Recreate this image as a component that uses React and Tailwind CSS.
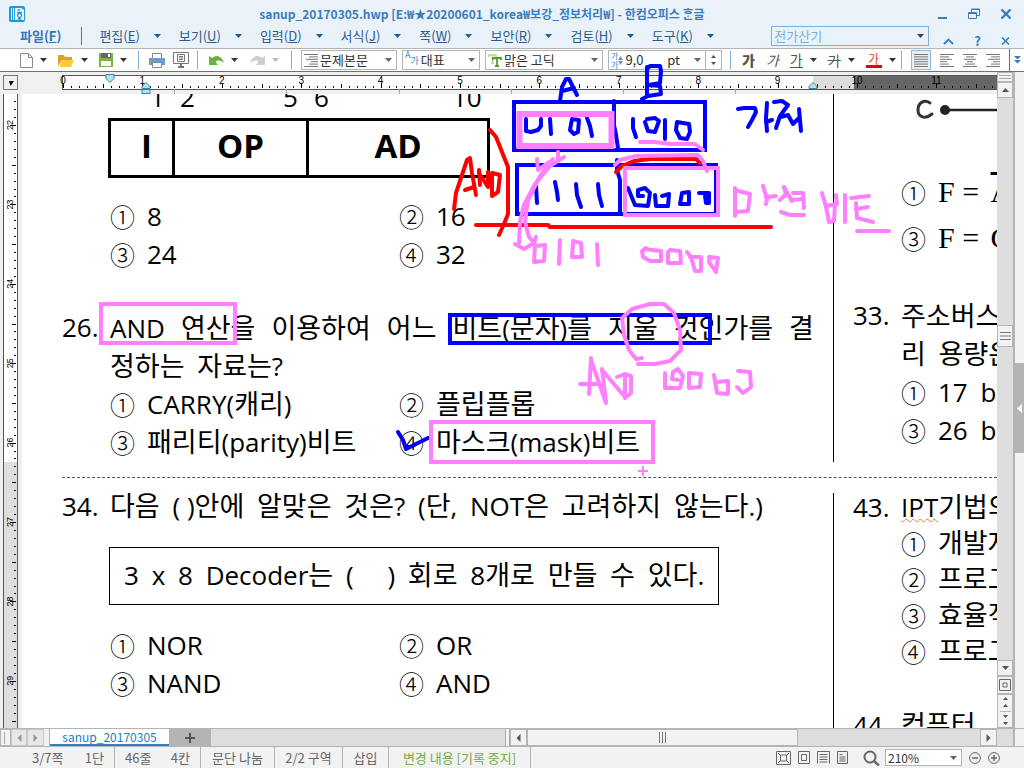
import React from "react";

const UI = "font-['Noto_Sans_CJK_KR',sans-serif]";

function Mixed({ children }) {
  return children.split(/([가-힣]+)/).map((part, i) =>
    i % 2 ? <span key={i} className="text-[27px]">{part}</span> : part
  );
}

function Words({ children }) {
  const words = children.split(" ");
  return words.map((w, i) => (
    <React.Fragment key={i}>
      <span className={i < words.length - 1 ? "mr-1.5" : ""}><Mixed>{w}</Mixed></span>
      {i < words.length - 1 ? " " : ""}
    </React.Fragment>
  ));
}

function Caret({ className = "text-[#444]" }) {
  return (
    <svg width="7" height="4" viewBox="0 0 7 4" className={`shrink-0 ${className}`}>
      <path d="M0 0h7L3.500 4z" fill="currentColor" />
    </svg>
  );
}

function Sep() {
  return <span className="h-[18px] w-px shrink-0 bg-[#7fb0d8]" />;
}

/* ---------- title and menu ---------- */

const menus = [
  ["편집", "E"],
  ["보기", "U"],
  ["입력", "D"],
  ["서식", "J"],
  ["쪽", "W"],
  ["보안", "R"],
  ["검토", "H"],
  ["도구", "K"],
];

function TitleBar() {
  return (
    <div className="flex h-6 items-center px-2 pt-1">
      <svg width="18" height="18" viewBox="0 0 18 18">
        <rect x="1" y="1" width="16" height="16" rx="2" fill="#1b9ad6" />
        <path d="M3.500 3v12M5.500 3v12" stroke="#fff" strokeWidth="1" />
        <path d="M7 3h6l3 2v10H7z" fill="#fff" />
        <path d="M9.500 5h3M9 7.500h5M11.500 8.500a2 2 0 1 0 .1 0M9.500 14h4" stroke="#1b9ad6" strokeWidth="1.300" fill="none" />
      </svg>
      <h1 className="flex-1 truncate text-center text-[12px] leading-5 font-bold text-[#3a7dbd]">
        sanup_20170305.hwp [E:₩★20200601_korea₩보강_정보처리₩] - 한컴오피스 ᄒᆞᆫ글
      </h1>
      <div className="flex items-center gap-5 pr-1 text-[#3a7dbd]">
        <button aria-label="최소화">
          <svg width="10" height="12" viewBox="0 0 10 12"><path d="M0 10h9" stroke="currentColor" strokeWidth="2" /></svg>
        </button>
        <button aria-label="이전 크기로">
          <svg width="12" height="12" viewBox="0 0 12 12" fill="none" stroke="currentColor">
            <path d="M3.500 4V1h8v6.500H9M3.500 1.500h8" /><path d="M.5 4.500h8v6h-8zM.5 5.500h8" />
          </svg>
        </button>
        <button aria-label="닫기">
          <svg width="12" height="12" viewBox="0 0 12 12"><path d="M1.500 1.500l9 9M10.500 1.500l-9 9" stroke="currentColor" strokeWidth="2.400" /></svg>
        </button>
      </div>
    </div>
  );
}

function MenuBar() {
  return (
    <div className="flex h-6 items-center pr-3.5 pl-5 text-[13px] leading-5 text-[#2a5b8c]">
      <button className="font-bold text-[#2f78bb]">
        파일(<span className="underline">F</span>)
      </button>
      <span className="mr-[17px] ml-5 h-[18px] w-px bg-[#3a7dbd]" />
      <nav className="flex gap-[18px]">
        {menus.map(([name, key]) => (
          <button key={key} className="flex items-center gap-3.5">
            <span>
              {name}(<span className="underline">{key}</span>)
            </span>
            <Caret className="text-[#1f5c99]" />
          </button>
        ))}
      </nav>
      <div className="ml-auto flex h-5 w-[158px] items-center border border-[#7fb0dd] pr-1">
        <input aria-label="찾을 내용" placeholder="전가산기" className="w-full min-w-0 bg-transparent px-0.5 text-[13px] outline-none placeholder:text-[#7fb0dd]" />
        <Caret />
      </div>
      <div className="ml-3.5 flex items-center gap-5 pt-2.5 text-[#3a7dbd]">
        <button aria-label="메뉴 접기">
          <svg width="11" height="8" viewBox="0 0 11 8"><path d="M1 7l4.500-4.500L10 7" stroke="currentColor" strokeWidth="1.800" fill="none" /></svg>
        </button>
        <button className="text-[13px] leading-3 font-bold">?</button>
        <button aria-label="문서 닫기">
          <svg width="9" height="8" viewBox="0 0 9 8"><path d="M1 .5l7 7M8 .5l-7 7" stroke="currentColor" strokeWidth="1.600" /></svg>
        </button>
      </div>
    </div>
  );
}

/* ---------- toolbar ---------- */

function ToolButton({ label, caret, muted, children }) {
  return (
    <button aria-label={label} className="flex shrink-0 items-center gap-[7px]">
      {children}
      {caret && <Caret className={muted ? "text-[#bbb]" : "text-[#333]"} />}
    </button>
  );
}

function Combo({ label, value, icon, className, children }) {
  return (
    <div className={`flex h-5 shrink-0 items-center border border-[#b4b4b4] bg-white ${className}`}>
      <span className="flex h-full min-w-0 flex-1 items-center gap-0.5 pr-1 pl-0.5">
        {icon}
        <select aria-label={label} className="min-w-0 flex-1 appearance-none bg-transparent text-[13px] leading-4 text-[#333] outline-none">
          <option>{value}</option>
        </select>
        {children}
        <Caret className="text-[#666]" />
      </span>
    </div>
  );
}

const alignRows = {
  justify: [[0, 14], [0, 14], [0, 14], [0, 14], [0, 14], [0, 14]],
  left: [[0, 14], [0, 9], [0, 12], [0, 7], [0, 9], [0, 14]],
  center: [[0, 14], [3, 11], [1, 13], [4, 10], [2, 12], [0, 14]],
  right: [[0, 14], [5, 14], [2, 14], [7, 14], [5, 14], [0, 14]],
};

function AlignIcon({ kind }) {
  return (
    <svg width="14" height="13" viewBox="0 0 14 13" stroke="#777" className="shrink-0">
      {alignRows[kind].map(([a, b], i) => (
        <path key={i} d={`M${a} ${i * 2.4 + 0.5}H${b}`} />
      ))}
    </svg>
  );
}

function Toolbar() {
  return (
    <div className="flex h-6 items-center border-t border-b border-t-[#b4b4b4] border-b-[#3a7dbd] bg-white pl-5">
      <div className="flex items-center gap-[11px]">
        <ToolButton label="새 문서" caret>
          <svg width="13" height="15" viewBox="0 0 13 15" fill="#fff" stroke="#888"><path d="M.5.5h8l4 4v10H.5zM8.500.5v4h4" /></svg>
        </ToolButton>
        <ToolButton label="불러오기" caret>
          <svg width="16" height="13" viewBox="0 0 16 13"><path d="M0 1h6l1 2h7v3H4l-4 6z" fill="#d9a02c" /><path d="M4 6h12l-3 7H1z" fill="#ffca3a" /></svg>
        </ToolButton>
        <ToolButton label="저장하기" caret>
          <svg width="14" height="14" viewBox="0 0 14 14"><path d="M0 0h14v14H0z" fill="#7cb342" /><path d="M2 0h10v5H2z" fill="#666" /><path d="M9 1h2v3H9z" fill="#fff" /><path d="M2 8h10v5H2z" fill="#fff" /></svg>
        </ToolButton>
        <Sep />
      </div>
      <div className="ml-2.5 flex items-center gap-2">
        <ToolButton label="인쇄">
          <svg width="16" height="15" viewBox="0 0 16 15"><path d="M3.500.5h9v5h-9z" fill="#fff" stroke="#888" /><path d="M0 5h16v7H0z" fill="#6b9ccb" /><path d="M3.500 9.500h9v5h-9z" fill="#fff" stroke="#888" /></svg>
        </ToolButton>
        <ToolButton label="미리 보기">
          <svg width="16" height="16" viewBox="0 0 16 16" fill="none" stroke="#777"><path d="M.5.5h15v11H.5z" /><path d="M4.500 2.500h7v7h-7zM6 4.500h4M6 6h4M6 7.500h4" /><path d="M8 12v3M5 15h6" strokeWidth="2" /></svg>
        </ToolButton>
        <Sep />
      </div>
      <div className="ml-[11px] flex items-center gap-3">
        <ToolButton label="되돌리기" caret>
          <svg width="15" height="12" viewBox="0 0 15 12"><path d="M0 2v9h9L6.500 8C8 5.500 12 6 15 9 13 2 7 0 3 4z" fill="#6fae45" /></svg>
        </ToolButton>
        <ToolButton label="다시 실행" caret muted>
          <svg width="15" height="12" viewBox="0 0 15 12"><path d="M15 2v9H6l2.500-3C7 5.500 3 6 0 9 2 2 8 0 12 4z" fill="#ccc" /></svg>
        </ToolButton>
        <Sep />
      </div>
      <div className="ml-[9px] flex items-center gap-[5px]">
        <Combo label="스타일" value="문제본문" className="w-24" icon={<AlignIcon kind="right" />} />
        <Combo
          label="언어"
          value="대표"
          className="w-[78px]"
          icon={<span className="flex shrink-0 text-[9px] leading-3 text-[#3f86c8]"><span className="-mt-1">A</span><span className="mt-0.5">가</span></span>}
        />
        <Combo
          label="글꼴"
          value="맑은 고딕"
          className="w-[118px]"
          icon={
            <svg width="14" height="13" viewBox="0 0 14 13" fill="none" className="shrink-0"><path d="M1 3V1h7v2M4.500 1v8M3 9h3" stroke="#b5d39a" strokeWidth="1.500" /><path d="M5 6V4h8v2M9 4v8M7 12h4" stroke="#5d9b33" strokeWidth="1.800" /></svg>
          }
        />
        <div className="flex">
          <Combo
            label="글자 크기"
            value="9,0"
            className="w-[98px]"
            icon={
              <span className="flex shrink-0 items-center text-[8px] leading-[9px] text-[#3f86c8]">
                <span>가<br />가</span>
                <svg width="5" height="9" viewBox="0 0 5 9"><path d="M0 4l2.500-4L5 4zM0 5l2.500 4L5 5z" fill="#5a9bd5" /></svg>
              </span>
            }
          >
            <span className="pr-3 text-[13px] text-[#333]">pt</span>
          </Combo>
          <span className="flex h-5 w-4 flex-col items-center justify-between border border-l-0 border-[#b4b4b4] py-1">
            <button aria-label="크게"><svg width="5" height="3" viewBox="0 0 5 3" className="block"><path d="M0 3h5L2.500 0z" fill="#555" /></svg></button>
            <button aria-label="작게"><svg width="5" height="3" viewBox="0 0 5 3" className="block"><path d="M0 0h5L2.500 3z" fill="#555" /></svg></button>
          </span>
        </div>
      </div>
      <div className="ml-2 flex items-center gap-[11px] text-[14px] leading-4 text-[#555]">
        <Sep />
        <button className="font-black">가</button>
        <button className="italic">가</button>
        <ToolButton label="밑줄" caret><span className="border-b border-[#555] leading-[15px]">가</span></ToolButton>
        <ToolButton label="취소선" caret><span className="line-through">가</span></ToolButton>
        <ToolButton label="글자 색" caret>
          <span className="w-4 border-b-[3px] border-red-600 text-center text-[12px] leading-3 text-[#e2502c]">가</span>
        </ToolButton>
      </div>
      <div className="ml-auto flex h-full items-center gap-[9px]">
        <Sep />
        <button aria-label="양쪽 정렬" className="flex h-5 w-5 items-center justify-center border border-[#8fb8dc] bg-[#e6f0f9]"><AlignIcon kind="justify" /></button>
        <button aria-label="왼쪽 정렬"><AlignIcon kind="left" /></button>
        <button aria-label="가운데 정렬"><AlignIcon kind="center" /></button>
        <button aria-label="오른쪽 정렬"><AlignIcon kind="right" /></button>
        <button aria-label="도구 더 보기" className="flex h-full w-[15px] items-center justify-center border-l border-[#3a7dbd]">
          <svg width="7" height="8" viewBox="0 0 7 8" fill="#3a7dbd"><path d="M0 0h7L3.500 3.500zM0 4h7L3.500 7.500z" /></svg>
        </button>
      </div>
    </div>
  );
}

/* ---------- rulers ---------- */

const UNIT = 79.4;

function HorizontalRuler() {
  const ticks = Array.from({ length: 118 }, (_, i) => i);
  return (
    <svg height="22" className="block w-full" aria-hidden="true">
      <rect x="40" y="3" width="751" height="14" fill="#fff" />
      <rect x="791" y="3" width="41" height="14" fill="#ddd" />
      <rect x="832" y="3" width="100%" height="14" fill="#666" />
      <path d="M40 3.500H1100M40 17.500H1100M40.500 3v14" stroke="#555" />
      {ticks.map((i) => {
        const x = Math.round(41 + (i * UNIT) / 10) + 0.5;
        return <path key={i} d={`M${x} ${i % 10 === 0 ? 11 : i % 5 === 0 ? 12 : 14}V16`} stroke="#000" />;
      })}
      {Array.from({ length: 12 }, (_, n) => (
        <text key={n} x={41 + n * UNIT} y="12" textAnchor="middle" fontSize="10" className="font-['Liberation_Sans',sans-serif]">{n}</text>
      ))}
      {[152, 264, 377, 489, 601, 713].map((x) => (
        <path key={x} d={`M${x}.5 17v5`} stroke="#aaa" />
      ))}
      <path d="M84 2.500h8v4l-4 4-4-4z" fill="#aee6f2" stroke="#3d7f99" />
      <path d="M120 21.500h8v-4h-8zM120 16.500h8v-2l-4-4-4 4z" fill="#aee6f2" stroke="#3d7f99" />
      <path d="M787 16.500h8v-2l-4-4-4 4z" fill="#aee6f2" stroke="#3d7f99" />
    </svg>
  );
}

function VerticalRuler() {
  const ticks = Array.from({ length: 80 }, (_, i) => i);
  return (
    <svg width="22" className="block h-full shrink-0 bg-[#f0f0f0]" aria-hidden="true">
      <rect x="3" y="0" width="14" height="368" fill="#fff" />
      <rect x="3" y="368" width="14" height="100%" fill="#ddd" />
      <path d="M3.500 0V1000M17.500 0V1000" stroke="#555" />
      {ticks.map((i) => {
        const y = Math.round(31 + ((i - 3) * UNIT) / 10) + 0.5;
        const k = (i - 3) % 10;
        return <path key={i} d={`M${k === 0 ? 10 : k === 5 ? 12 : 14} ${y}H16`} stroke="#000" />;
      })}
      {Array.from({ length: 8 }, (_, n) => (
        <text key={n} x="0" y="0" transform={`translate(13 ${31 + n * UNIT}) rotate(-90)`} textAnchor="middle" fontSize="9" className="font-['Liberation_Sans',sans-serif]">
          {22 + n}
        </text>
      ))}
    </svg>
  );
}

/* ---------- document ---------- */

const marks = ["①", "②", "③", "④"];

function Marker({ n }) {
  return <span className="w-[37px] shrink-0 font-['Noto_Sans_CJK_KR',sans-serif] text-[25px] font-light">{marks[n - 1]}</span>;
}

function Option({ n, children, className = "w-[289px]" }) {
  return (
    <li className={`flex shrink-0 whitespace-nowrap ${className}`}>
      <Marker n={n} />
      <span><Words>{children}</Words></span>
    </li>
  );
}

function Options({ items }) {
  return (
    <ul className="flex flex-wrap pl-12">
      {items.map((t, i) => (
        <Option key={i} n={i + 1}>{t}</Option>
      ))}
    </ul>
  );
}

function Line({ no, className = "", children }) {
  return (
    <p className="flex whitespace-nowrap">
      <span className="w-12 shrink-0">{no}</span>
      <span className={className}>{typeof children === "string" ? <Words>{children}</Words> : children}</span>
    </p>
  );
}

function Document() {
  return (
    <main className="min-w-0 flex-1 overflow-hidden bg-white pl-10 font-['Open_Sans','Noto_Sans_CJK_KR',sans-serif] text-[26px] leading-[38px] text-black">
      <section className="flex">
        <div className="h-[368px] w-[772px] shrink-0 overflow-hidden border-r border-black">
          <div className="flex h-6 pl-[88px] leading-[6px]">
            <span className="w-[30px]">1</span>
            <span className="w-[103px]">2</span>
            <span className="w-[31px]">5</span>
            <span className="w-[138px]">6</span>
            <span>10</span>
          </div>
          <table className="ml-[46px] h-[60px] w-[382px] table-fixed border-collapse text-center text-[33px] leading-9 font-bold">
            <tbody>
              <tr>
                <td className="w-16 border-3 border-black p-0 pb-1 pl-2.5">I</td>
                <td className="w-[134px] border-3 border-black p-0 pb-1">OP</td>
                <td className="border-3 border-black p-0 pb-1">AD</td>
              </tr>
            </tbody>
          </table>
          <div className="h-[19px]" />
          <Options items={["8", "16", "24", "32"]} />
          <div className="h-9" />
          <div className="leading-[37px]">
            <Line no="26." className="w-[704px] [text-align-last:justify]">AND 연산을 이용하여 어느 비트(문자)를 지울 것인가를 결</Line>
            <Line no="">정하는 자료는?</Line>
          </div>
          <Options items={["CARRY(캐리)", "플립플롭", "패리티(parity)비트", "마스크(mask)비트"]} />
        </div>
        <div className="min-w-0 flex-1 overflow-hidden pl-[19px]">
          <svg width="100" height="34" viewBox="0 0 100 34" className="ml-[60px] block">
            <path d="M17 9c-6-4-12 0-12 7s7 10 14 4" fill="none" stroke="#333" strokeWidth="3" strokeLinecap="round" />
            <circle cx="32" cy="16" r="5" fill="#222" />
            <path d="M32 16h70" stroke="#222" strokeWidth="2.500" />
          </svg>
          <ul className="flex flex-col gap-2 pt-[45px] pl-12">
            {[1, 3].map((n) => (
              <li key={n} className="flex h-[38px] whitespace-nowrap">
                <Marker n={n} />
                <span className="font-['Liberation_Serif',serif] text-[30px]">F = {n === 1 ? <span className="ml-1 overline">A</span> : <span className="ml-1">C</span>}</span>
              </li>
            ))}
          </ul>
          <div className="h-10" />
          <div className="leading-[37px]">
            <Line no="33.">주소버스가</Line>
            <Line no="">리 용량은</Line>
          </div>
          <ul className="pl-12">
            <Option n={1}>17 bit</Option>
            <Option n={3}>26 bit</Option>
          </ul>
        </div>
      </section>

      <div className="my-[15px] border-t border-dashed border-[#555]" />

      <section className="flex">
        <div className="h-[400px] w-[772px] shrink-0 border-r border-black">
          <div className="-mt-1.5 h-[38px]">
            <Line no="34.">{"다음 (\u00a0)안에 알맞은 것은? (단, NOT은 고려하지 않는다.)"}</Line>
          </div>
          <div className="mt-[22px] ml-[47px] flex h-[58px] w-[610px] items-center border border-black pb-0.5 pl-3.5 whitespace-nowrap">
            <span><Words>{"3 x 8 Decoder는 (\u00a0\u00a0\u00a0\u00a0\u00a0) 회로 8개로 만들 수 있다."}</Words></span>
          </div>
          <div className="h-[21px]" />
          <Options items={["NOR", "OR", "NAND", "AND"]} />
        </div>
        <div className="min-w-0 flex-1 overflow-hidden pl-[19px] leading-9">
          <div className="-mt-1 h-9">
            <Line no="43."><span className="underline decoration-[#f08030] decoration-wavy decoration-1">IPT</span><Mixed>기법의</Mixed></Line>
          </div>
          <ul className="pl-12">
            <Option n={1}>개발자</Option>
            <Option n={2}>프로그램</Option>
            <Option n={3}>효율적</Option>
            <Option n={4}>프로그램</Option>
          </ul>
          <div className="h-[38px]" />
          <Line no="44.">컴퓨터</Line>
        </div>
      </section>
    </main>
  );
}

/* ---------- scroll bars ---------- */

const box = "flex shrink-0 items-center justify-center border border-[#b4b4b4] bg-[#f2f2f2]";

function Arrow({ dir }) {
  const d = { up: "M0 6h7L3.500 2z", down: "M0 2h7L3.500 6z", left: "M5.500 0v8L1.500 4z", right: "M1.500 0v8l4-4z" }[dir];
  return <svg width="7" height="8" viewBox="0 0 7 8" className="block"><path d={d} fill="#555" /></svg>;
}

function VerticalScroll() {
  return (
    <div className="flex w-[18px] shrink-0 flex-col border-r-2 border-[#b4b4b4] bg-[#ddd]">
      <div className={`${box} h-2.5`}><span className="h-1 w-3 border-y border-[#aaa]" /></div>
      <button aria-label="위로" className={`${box} h-4`}><Arrow dir="up" /></button>
      <div className="basis-[227px]" />
      <div className={`${box} h-[22px]`}>
        <svg width="11" height="8" viewBox="0 0 11 8" stroke="#777"><path d="M0 .5h11M0 4h11M0 7.500h11" /></svg>
      </div>
      <div className="flex-1" />
      <button aria-label="아래로" className={`${box} h-4`}><Arrow dir="down" /></button>
      <button aria-label="개체 선택" className={`${box} h-[18px]`}>
        <svg width="12" height="12" viewBox="0 0 12 12" fill="none" stroke="#666"><path d="M.5.5h11v11H.5zM4 4h4v4H4z" /></svg>
      </button>
      <button aria-label="쪽 이동" className={`${box} h-[34px]`}>
        <svg width="11" height="28" viewBox="0 0 11 28" fill="#555">
          <path d="M3 3h5L5.500 0zM3 10h5L5.500 7zM3 18h5L5.500 21zM3 25h5L5.500 28z" /><path d="M0 14h11v1H0z" fill="#bbb" />
        </svg>
      </button>
    </div>
  );
}

function SidePanelHandle() {
  return (
    <div className="flex w-[9px] shrink-0 flex-col bg-[#f2f2f2]">
      <div className="basis-[291px]" />
      <button aria-label="작업 창 펼치기" className="flex h-[90px] items-center justify-center bg-[#b4b4b4]">
        <svg width="5" height="9" viewBox="0 0 5 9"><path d="M5 0v9L0 4.500z" fill="#fff" /></svg>
      </button>
    </div>
  );
}

function SheetTabs() {
  return (
    <div className="flex h-[18px] border-t border-[#b4b4b4] bg-[#ddd]">
      <div className={`${box} w-[11px]`}><span className="h-3 w-1 border-l border-[#aaa]" /></div>
      <button aria-label="이전 탭" className={`${box} w-4 opacity-50`}><Arrow dir="left" /></button>
      <button aria-label="다음 탭" className={`${box} w-[17px] opacity-50`}><Arrow dir="right" /></button>
      <span className="w-1.5 shrink-0 border-r border-[#b4b4b4] bg-[#f2f2f2]" />
      <button className="w-[119px] shrink-0 border-b-2 border-[#3a7dbd] bg-white text-[12px] leading-3 text-[#1f7cc0]">sanup_20170305</button>
      <button aria-label="탭 추가" className="flex w-[42px] shrink-0 items-center justify-center bg-[#b4b4b4]">
        <svg width="10" height="10" viewBox="0 0 10 10"><path d="M0 5h10M5 0v10" stroke="#555" strokeWidth="2" /></svg>
      </button>
      <div className="flex-1" />
      <span className="w-[5px] shrink-0 border-x border-[#aaa] bg-[#f2f2f2]" />
      <div className="flex basis-[514px]">
        <button aria-label="왼쪽으로" className={`${box} w-[17px]`}><Arrow dir="left" /></button>
        <div className={`${box} w-[271px]`}>
          <svg width="8" height="11" viewBox="0 0 8 11" stroke="#777"><path d="M.5 0v11M3.500 0v11M6.500 0v11" /></svg>
        </div>
        <div className="flex-1" />
        <button aria-label="오른쪽으로" className={`${box} w-[17px]`}><Arrow dir="right" /></button>
        <span className="w-[18px] border-r-2 border-[#b4b4b4]" />
        <span className="w-[9px] bg-[#f2f2f2]" />
      </div>
    </div>
  );
}

function StatusBar() {
  const cell = "flex h-full items-center border-r border-[#b4b4b4]";
  return (
    <footer className="flex h-[22px] shrink-0 items-center border-t border-[#b4b4b4] bg-[#f2f2f2] text-[13px] leading-4 whitespace-nowrap text-[#666]">
      <span className={`${cell} w-[115px] justify-between pr-2.5 pl-8`}><span>3/7쪽</span><span>1단</span></span>
      <span className={`${cell} w-[86px] justify-between px-2.5`}><span>46줄</span><span>4칸</span></span>
      <span className={`${cell} w-[74px] justify-center`}>문단 나눔</span>
      <span className={`${cell} w-[68px] justify-center`}>2/2 구역</span>
      <span className={`${cell} w-[46px] justify-center`}>삽입</span>
      <span className={`${cell} w-[142px] justify-center text-[#74ab45]`}>변경 내용 [기록 중지]</span>
      <div className="ml-auto flex items-center gap-[7px] pr-6">
        <button aria-label="쪽 맞춤">
          <svg width="15" height="14" viewBox="0 0 15 14" fill="none" stroke="#666"><path d="M.5.5h14v13H.5zM4.500 4h6v6h-6z" /><path d="M2 2l2 2M13 2l-2 2M2 12l2-2M13 12l-2-2" /></svg>
        </button>
        <button aria-label="폭 맞춤">
          <svg width="12" height="13" viewBox="0 0 12 13" fill="none" stroke="#666"><path d="M.5.5h11v12H.5zM3.500 3.500h5v6h-5z" /></svg>
        </button>
        <button aria-label="문단 보기">
          <svg width="13" height="13" viewBox="0 0 13 13" fill="none" stroke="#666"><path d="M.5 12.500V.5h12v12M2.500 3.500h8M2.500 6h8M2.500 8.500h8M2.500 11h8" /></svg>
        </button>
        <button aria-label="쪽 윤곽">
          <svg width="11" height="13" viewBox="0 0 11 13" fill="none" stroke="#666"><path d="M.5.5h10v12H.5zM2.500 3.500h3M2.500 6h6M2.500 8h6M2.500 10h6" /></svg>
        </button>
        <svg width="17" height="16" viewBox="0 0 17 16" className="ml-2" fill="none" stroke="#666"><circle cx="7" cy="7" r="5.500" strokeWidth="2" /><path d="M11 11l5 4.500" strokeWidth="2.500" /></svg>
        <span className="-ml-0.5 flex h-[17px] w-[77px] items-center border border-[#b4b4b4] bg-white pr-1">
          <select aria-label="확대 비율" className="min-w-0 flex-1 appearance-none bg-transparent px-0.5 text-[12px] leading-[15px] text-[#333] outline-none">
            <option>210%</option>
          </select>
          <Caret className="text-[#666]" />
        </span>
        <button aria-label="축소">
          <svg width="12" height="12" viewBox="0 0 12 12" fill="none" stroke="#666"><circle cx="6" cy="6" r="5.400" /><path d="M3 6h6" strokeWidth="1.500" /></svg>
        </button>
        <button aria-label="확대">
          <svg width="12" height="12" viewBox="0 0 12 12" fill="none" stroke="#666"><circle cx="6" cy="6" r="5.400" /><path d="M3 6h6M6 3v6" strokeWidth="1.500" /></svg>
        </button>
      </div>
    </footer>
  );
}

/* ---------- pen annotations over the page ---------- */

const bluePen = [
  "560,101 562,87 566,79 569,79 573,87 577,95", "562,91 574,88",
  "647,67 647,95", "647,69 650,66 660,66 661,71 660,83 649,85 660,86 661,94 648,96 642,99",
  "614,101 614,125 616,135 618,148",
  "526,119 526,131 531,132 538,130 541,126 541,119", "550,119 551,134",
  "572,119 570,130 574,134 578,132 579,120 572,119", "587,118 590,126 592,136",
  "633,119 633,128 636,137",
  "645,122 648,131 655,132 659,121 655,118 647,119", "665,120 665,139",
  "677,122 676,130 680,138 687,139 690,132 689,124 677,122",
  "738,109 744,108 755,108 756,112 752,120 748,127",
  "767,103 766,118 767,131", "766,122 772,120",
  "774,102 782,101 788,105 780,116 776,128", "781,117 788,115 793,124 799,118", "799,109 801,131",
  "617,160 617,170 620,180 620,212",
  "536,186 537,203", "555,182 557,192 558,200", "576,184 577,195 581,207", "598,184 599,195 602,206",
  "628,188 635,205 648,206 650,193 645,188 638,190 638,196 643,196",
  "655,195 656,206 668,206 669,194 662,196",
  "682,193 680,204 689,204 689,192 682,193",
  "699,193 709,193 709,203 706,203 705,196",
  "398,432 403,440 406,449 418,443 428,438",
];
const redPen = [
  "490,130 496,137 502,152 508,167 508,214 504,224 499,235",
  "454,209 456,193 461,178 467,160 470,158 472,173 476,195", "465,190 474,187",
  "479,170 480,185", "479,173 488,187 488,172", "492,173 492,196 498,192 500,175 492,173",
  "476,225 548,225 550,227 771,227",
  "616,172 622,166 634,161 650,159 696,159 700,163",
];
const pinkPen = [
  "640,142 655,142 670,144 695,144 703,150",
  "615,165 620,160 636,156 698,155 703,161 707,171",
  "564,157 550,166 535,184 524,205 520,222 519,243",
  "553,159 540,176 528,200 525,222 529,237 534,243",
  "515,244 524,249 534,243 536,237", "537,159 538,170 549,162", "558,152 558,161",
  "535,245 534,262 544,261 545,245 535,246", "560,240 559,264",
  "573,243 572,257 582,257 581,243 573,241", "597,244 598,265",
  "646,248 642,251 643,257 650,261 661,261 661,251 644,249",
  "668,252 668,263 681,263 680,251 670,250", "687,252 691,257 695,271 701,271 701,257 690,257",
  "710,257 709,262 716,272 718,258 709,257",
  "735,188 735,216", "735,190 750,194 748,211 736,212", "763,186 767,199 766,204", "766,197 776,196",
  "784,187 786,194 780,200", "784,187 792,201", "793,193 803,193 804,208", "791,200 803,199", "781,212 790,215 804,215",
  "822,193 826,207 829,222 834,221 835,204", "826,206 837,204 836,195", "845,195 845,222",
  "851,198 869,196", "856,203 857,218 873,222", "856,209 868,207", "857,231 889,231",
  "642,358 636,359 629,350 624,335 622,318 632,309 650,304 664,304 674,313 680,330 681,350 670,361 655,364 638,364",
  "591,358 589,394", "591,360 606,403", "580,384 598,384", "602,369 606,402", "602,370 625,397",
  "617,377 625,374 631,376 631,393 625,398 625,374",
  "665,373 665,388 680,388 683,376 678,369 673,372 672,379 678,380",
  "689,373 689,388 700,387 701,374 689,373", "714,375 717,393 728,394 728,381 716,382",
  "738,371 750,372 751,387 743,393 737,387",
];

function Annotations() {
  return (
    <svg width="1024" height="768" viewBox="0 0 1024 768" fill="none" strokeWidth="4" strokeLinecap="round" strokeLinejoin="round" className="pointer-events-none absolute top-0 left-0" aria-hidden="true">
      <g stroke="#0000ff">
        <g strokeLinejoin="miter">
          <rect x="514" y="102" width="191" height="48" />
          <rect x="517" y="165" width="199" height="49" />
          <rect x="450" y="315" width="260" height="28" />
        </g>
        {bluePen.map((p) => <polyline key={p} points={p} />)}
      </g>
      <g stroke="#ff0000">{redPen.map((p) => <polyline key={p} points={p} />)}</g>
      <g stroke="#ff80ff">
        <g strokeLinejoin="miter">
          <rect x="519.500" y="114" width="92" height="32" strokeWidth="6" />
          <rect x="625" y="168" width="93" height="47" />
          <rect x="101" y="304" width="134" height="39" />
          <rect x="431" y="422" width="222" height="40" />
        </g>
        {pinkPen.map((p) => <polyline key={p} points={p} />)}
        <path d="M643 466v10M638 471h10" strokeWidth="2" strokeLinecap="butt" />
      </g>
    </svg>
  );
}

export default function App() {
  return (
    <div className={`relative flex h-screen flex-col overflow-hidden bg-[#f0f0f0] ${UI}`}>
      <header className="shrink-0 bg-[#eaf2f9]">
        <TitleBar />
        <MenuBar />
        <Toolbar />
      </header>
      <div className="flex min-h-0 flex-1">
        <div className="flex min-w-0 flex-1 flex-col">
          <div className="flex h-[22px] shrink-0">
            <div className="flex w-[22px] shrink-0 pt-[3px] pl-[3px]">
              <button aria-label="탭 종류" className="flex h-[15px] w-[15px] items-end justify-end border border-[#777] p-[3px]">
                <svg width="5" height="5" viewBox="0 0 5 5"><path d="M0 0h5L1.500 5z" fill="#000" /></svg>
              </button>
            </div>
            <div className="min-w-0 flex-1"><HorizontalRuler /></div>
          </div>
          <div className="flex min-h-0 flex-1">
            <VerticalRuler />
            <Document />
          </div>
        </div>
        <VerticalScroll />
        <SidePanelHandle />
      </div>
      <SheetTabs />
      <StatusBar />
      <Annotations />
    </div>
  );
}
